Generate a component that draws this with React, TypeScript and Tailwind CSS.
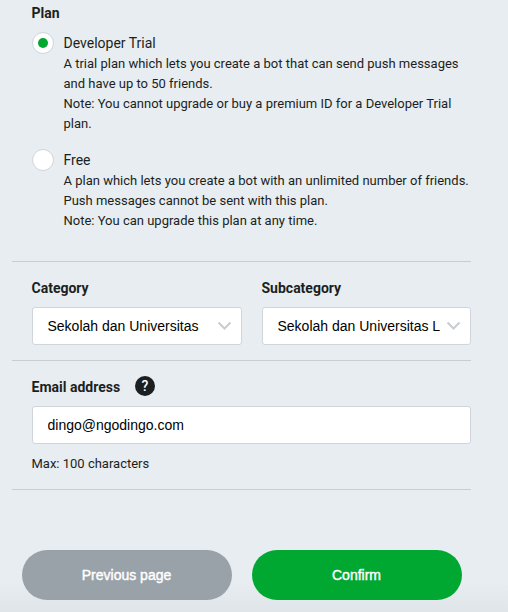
import { useState } from 'react';

interface Plan {
  id: string;
  name: string;
  lines: string[];
}

const plans: Plan[] = [
  {
    id: 'trial',
    name: 'Developer Trial',
    lines: [
      'A trial plan which lets you create a bot that can send push messages',
      'and have up to 50 friends.',
      'Note: You cannot upgrade or buy a premium ID for a Developer Trial',
      'plan.',
    ],
  },
  {
    id: 'free',
    name: 'Free',
    lines: [
      'A plan which lets you create a bot with an unlimited number of friends.',
      'Push messages cannot be sent with this plan.',
      'Note: You can upgrade this plan at any time.',
    ],
  },
];

interface PlanOptionProps {
  plan: Plan;
  checked: boolean;
  onSelect: () => void;
}

const PlanOption = ({ plan, checked, onSelect }: PlanOptionProps) => (
  <div className="flex cursor-pointer gap-[9.5px]" onClick={onSelect}>
    <div className="-mt-px flex size-[22px] shrink-0 items-center justify-center rounded-full border border-[#d0d5dc] bg-white">
      {checked && <div className="size-2.5 rounded-full bg-[#00a832]" />}
    </div>
    <div className="whitespace-nowrap">
      <div className="text-[14px] leading-5">{plan.name}</div>
      <div className="-mb-px pt-px text-[13px] leading-5">
        {plan.lines.map((line) => (
          <div key={line}>{line}</div>
        ))}
      </div>
    </div>
  </div>
);

const SelectField = ({ label, value }: { label: string; value: string }) => (
  <div className="min-w-0">
    <div className="-ml-[0.5px] text-[14px] leading-5 font-bold">{label}</div>
    <div className="mt-[9px] flex h-[38px] items-center rounded-[3px] border border-[#d0d5dc] bg-white pr-[9px] pl-[14.5px]">
      <div className="flex-1 overflow-hidden font-['Liberation_Sans',sans-serif] text-[14px] whitespace-nowrap text-black">
        {value}
      </div>
      <svg className="ml-1.5 shrink-0" width="15" height="10" viewBox="0 0 15 10" fill="none">
        <path d="M1.5 1.5 L7.5 7.5 L13.5 1.5" stroke="#c8cdd2" strokeWidth="2" />
      </svg>
    </div>
  </div>
);

export default function App() {
  const [selected, setSelected] = useState('trial');
  const [email, setEmail] = useState('dingo@ngodingo.com');

  return (
    <div className="flex h-[612px] w-[508px] flex-col overflow-hidden bg-[#e8edf1] bg-[linear-gradient(to_bottom,transparent_582px,#e0e5e9_612px)] font-['Roboto',sans-serif] text-[#1b1f22]">
      <section className="ml-3 h-[262px] w-[459px] border-b border-[#c8cdd2] pt-[3px] pl-5">
        <div className="-ml-[0.5px] text-[14px] leading-5 font-bold">Plan</div>
        <div className="mt-2.5 flex flex-col gap-[17px]">
          {plans.map((plan) => (
            <PlanOption
              key={plan.id}
              plan={plan}
              checked={selected === plan.id}
              onSelect={() => setSelected(plan.id)}
            />
          ))}
        </div>
      </section>

      <section className="ml-3 grid h-[99px] w-[459px] grid-cols-[210px_209px] gap-5 border-b border-[#c8cdd2] pt-4 pl-5">
        <SelectField label="Category" value="Sekolah dan Universitas" />
        <SelectField label="Subcategory" value="Sekolah dan Universitas L" />
      </section>

      <section className="ml-3 h-[129px] w-[459px] border-b border-[#c8cdd2] pt-4 pl-5">
        <div className="-ml-[0.5px] flex h-5 items-center">
          <span className="w-[103.5px] text-[14px] leading-5 font-bold">Email address</span>
          <span className="-mt-0.5 flex size-5 items-center justify-center rounded-full bg-[#1b1f22] text-[14px] leading-5 font-medium text-white">
            ?
          </span>
        </div>
        <input
          value={email}
          onChange={(e) => setEmail(e.target.value)}
          className="mt-[9px] block h-[38px] w-full rounded-[3px] border border-[#d0d5dc] bg-white px-[14.5px] font-['Liberation_Sans',sans-serif] text-[14px] text-black outline-none"
        />
        <div className="mt-2.5 -ml-[0.5px] text-[13px] leading-5">Max: 100 characters</div>
      </section>

      <div className="mt-[60px] ml-[22px] flex gap-5 font-['Liberation_Sans',sans-serif] text-[14px] text-white">
        <button className="h-[50px] w-[210px] rounded-full bg-[#9aa2a9] pr-px [-webkit-text-stroke:0.4px_white]">
          Previous page
        </button>
        <button className="h-[50px] w-[210px] rounded-full bg-[#00a832] pr-px [-webkit-text-stroke:0.4px_white]">
          Confirm
        </button>
      </div>
    </div>
  );
}
